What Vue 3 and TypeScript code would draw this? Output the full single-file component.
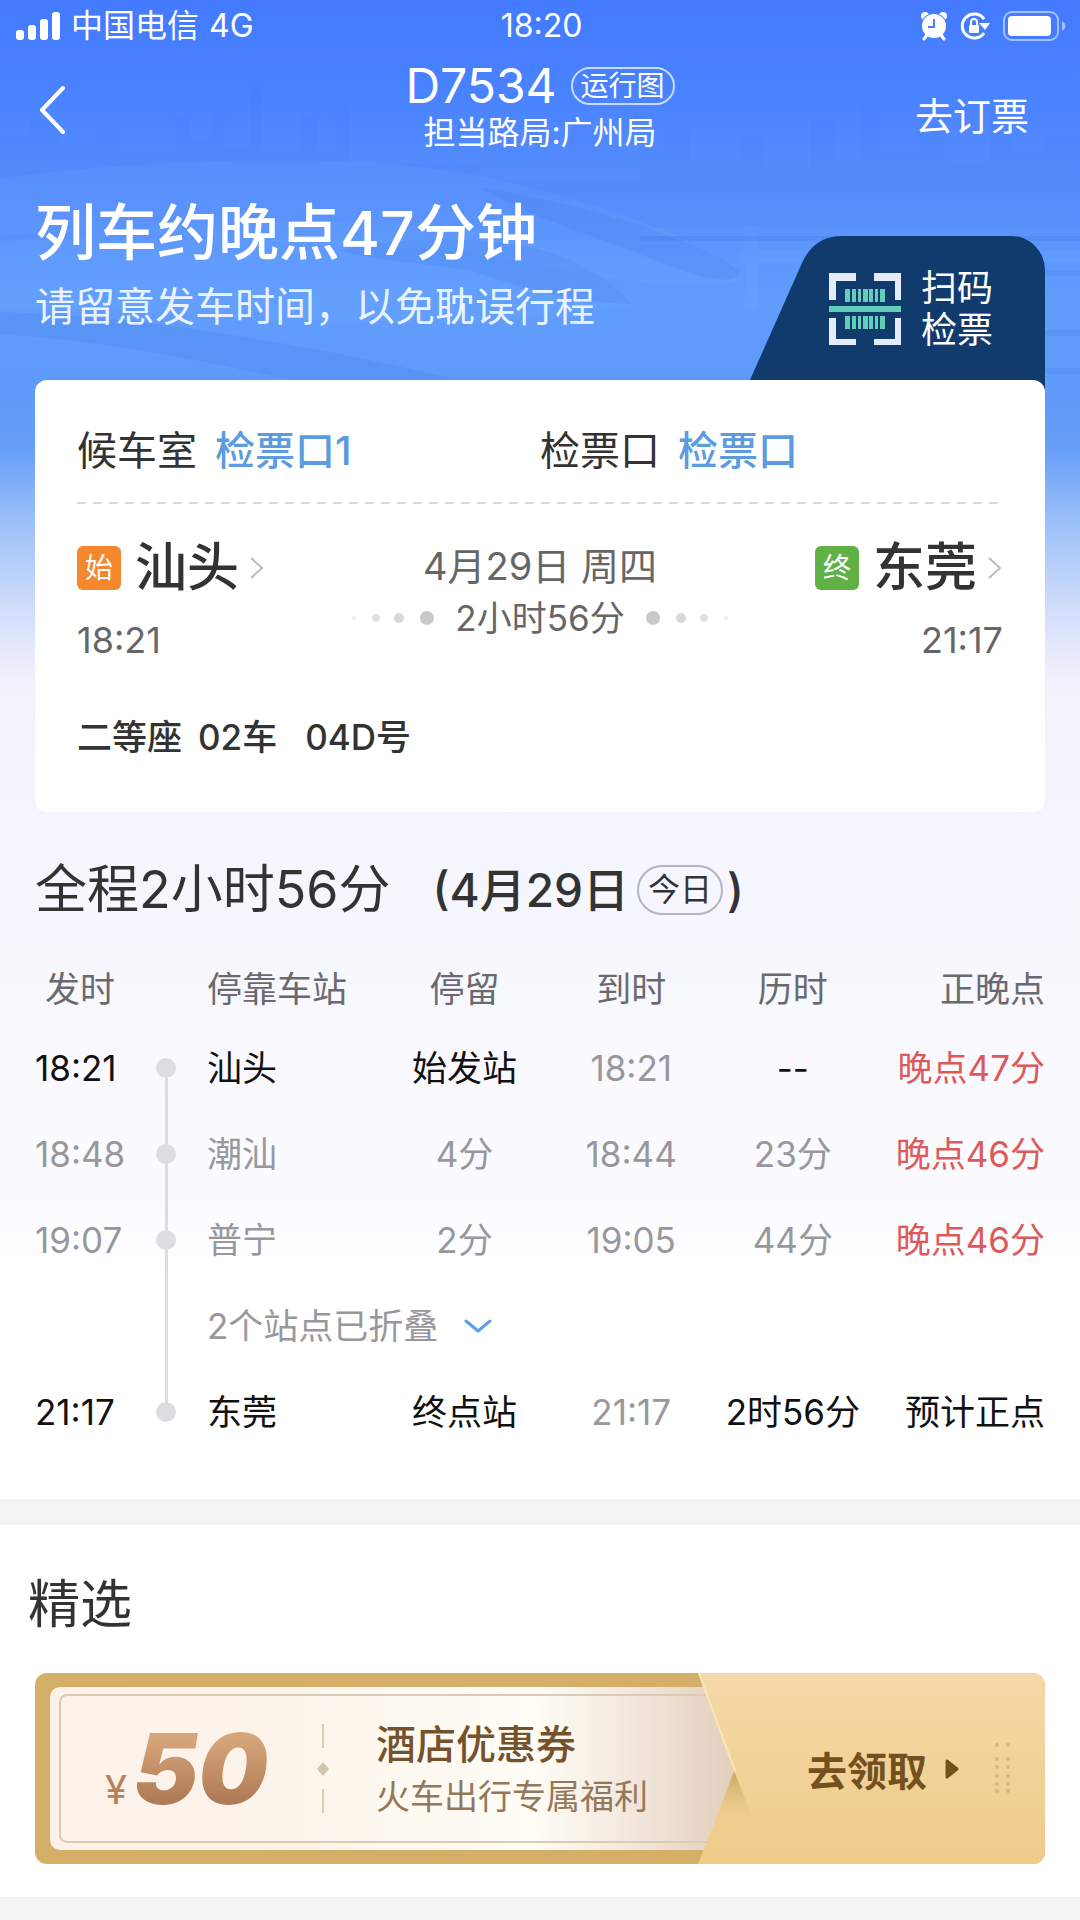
<script setup lang="ts">
type Tone = 'strong' | 'muted' | 'late'

interface Stop {
  depart: string
  station: string
  stay: string
  arrive: string
  elapsed: string
  status: string
  endpoint: boolean
  statusTone: Tone
}

const headers: string[] = ['停留', '到时', '历时']

const stops: Stop[] = [
  { depart: '18:21', station: '汕头', stay: '始发站', arrive: '18:21', elapsed: '--', status: '晚点47分', endpoint: true, statusTone: 'late' },
  { depart: '18:48', station: '潮汕', stay: '4分', arrive: '18:44', elapsed: '23分', status: '晚点46分', endpoint: false, statusTone: 'late' },
  { depart: '19:07', station: '普宁', stay: '2分', arrive: '19:05', elapsed: '44分', status: '晚点46分', endpoint: false, statusTone: 'late' },
]

const lastStop: Stop = {
  depart: '21:17', station: '东莞', stay: '终点站', arrive: '21:17', elapsed: '2时56分', status: '预计正点', endpoint: true, statusTone: 'strong',
}

const barcode: number[][] = [[16, 5], [23, 4], [29, 3], [34, 5], [40, 4], [46, 3], [51, 5]]
const perforation: number[] = [72, 86, 94, 103, 111, 118]
</script>

<template>
  <main class="page">
    <svg class="scene" viewBox="0 0 1080 400" preserveAspectRatio="xMidYMin slice" aria-hidden="true">
      <path class="city" d="M0 135H30V120H60V145H95V130H120V150H175V115H190V140H212V110H225V148H250V80H262V150H300V115H318V150H335V105H350V165H480V180H640V150H665V130H690V160H740V138H765V170H810V120H835V160H860V105H880V150H920V125H945V165H990V110H1012V150H1045V135H1080V240H0Z" />
      <path class="body" d="M0 178C160 158 370 150 500 180C600 204 700 236 745 280C640 300 520 250 400 248C240 244 120 225 0 236Z" />
      <path class="shade" d="M482 188C560 200 690 232 740 272C735 286 700 280 650 258C590 234 520 214 482 188Z" />
      <path class="body" d="M0 242C180 222 400 210 520 240C580 258 620 285 634 306C540 310 500 330 420 320C260 330 120 300 0 310Z" />
      <path class="shade" d="M340 250C420 232 530 238 575 262C605 278 620 290 632 304C570 302 520 288 470 270C420 262 380 262 340 250Z" />
      <path class="shade" d="M0 312C160 316 330 350 470 382H300C200 360 100 340 0 334Z" />
      <path class="body" d="M640 228H1080V236H640ZM740 250H1080V262H740ZM745 226H758V310H745Z" />
      <path class="shade" d="M640 236H1080V241H640ZM1000 270H1080V276H1000ZM1000 330H1080V336H1000ZM1000 368H1080V374H1000Z" />
    </svg>

    <div class="statusbar">
      <div class="carrier">
        <svg width="45" height="30" viewBox="0 0 45 30" fill="#fff" aria-hidden="true">
          <rect x="0" y="19" width="8" height="10" rx="3" />
          <rect x="12" y="14" width="8" height="15" rx="3" />
          <rect x="24" y="8" width="8" height="21" rx="3" />
          <rect x="36" y="1" width="8" height="28" rx="3" />
        </svg>
        <span>中国电信</span>
        <span>4G</span>
      </div>
      <time>18:20</time>
      <div class="indicators">
        <svg width="28" height="30" viewBox="0 0 28 30" aria-label="闹钟">
          <circle cx="5" cy="5" r="4" fill="#fff" />
          <circle cx="23" cy="5" r="4" fill="#fff" />
          <circle cx="14" cy="15" r="13" fill="#4a80ff" />
          <circle cx="14" cy="15" r="12" fill="#fff" />
          <path d="M7 24L4 28M21 24L24 28" stroke="#fff" stroke-width="3" stroke-linecap="round" />
          <path d="M14 8V16H8" stroke="#4a80ff" stroke-width="2" fill="none" />
        </svg>
        <svg width="30" height="30" viewBox="0 0 30 30" aria-label="方向锁定">
          <path d="M24 8A12 12 0 1 0 24 22" stroke="#fff" stroke-width="3" fill="none" />
          <path d="M19 12H30L25 19Z" fill="#fff" />
          <rect x="9" y="14" width="10" height="8" rx="1" fill="#fff" />
          <path d="M11 14V11A3 3 0 0 1 17 11V14" stroke="#fff" stroke-width="2" fill="none" />
        </svg>
        <svg width="65" height="32" viewBox="0 0 65 32" aria-label="电量">
          <rect x="2" y="2" width="54" height="28" rx="8" stroke="#fff" stroke-opacity=".5" stroke-width="2" fill="none" />
          <rect x="6" y="6" width="43" height="20" rx="4" fill="#fff" />
          <path d="M60 11Q67 16 60 21Z" fill="#fff" fill-opacity=".5" />
        </svg>
      </div>
    </div>

    <header class="nav">
      <button class="back" type="button" aria-label="返回">
        <svg width="28" height="50" viewBox="0 0 28 50" aria-hidden="true">
          <path d="M26 3L5 25L26 47" fill="none" stroke="#fff" stroke-width="4" stroke-linecap="round" stroke-linejoin="round" />
        </svg>
      </button>
      <div class="train">
        <div class="train-row">
          <h1>D7534</h1>
          <button class="pill" type="button">运行图</button>
        </div>
        <p>担当路局:广州局</p>
      </div>
      <a class="book" href="#book">去订票</a>
    </header>

    <section class="hero">
      <div class="notice">
        <h2>列车约晚点47分钟</h2>
        <p>请留意发车时间，以免耽误行程</p>
      </div>
      <button class="scan" type="button">
        <svg class="scan-bg" viewBox="0 0 295 158" aria-hidden="true">
          <path d="M0 144L52 27Q64 0 92 0H261A34 34 0 0 1 295 34V158H0Z" fill="#123b6d" />
        </svg>
        <svg width="72" height="72" viewBox="0 0 72 72" aria-hidden="true">
          <path d="M0 0H27V8H7V27H0ZM45 0H72V27H66V8H45ZM0 45H7V66H27V72H0ZM66 45H72V72H45V66H66Z" fill="#e4ebfb" />
          <rect y="33" width="72" height="6" fill="#62cfb9" />
          <g fill="#62cfb9">
            <template v-for="bar in barcode" :key="bar[0]">
              <rect :x="bar[0]" y="16" :width="bar[1]" height="13" />
              <rect :x="bar[0]" y="43" :width="bar[1]" height="13" />
            </template>
          </g>
        </svg>
        <span>扫码<br />检票</span>
      </button>
    </section>

    <section class="ticket">
      <div class="gates">
        <p>候车室 <b>检票口1</b></p>
        <p>检票口 <b>检票口</b></p>
      </div>
      <svg class="dash" width="100%" height="2" aria-hidden="true">
        <line x1="0" y1="1" x2="100%" y2="1" stroke="#d9d9d9" stroke-width="2" stroke-dasharray="9 7" />
      </svg>
      <div class="route">
        <div class="end">
          <a class="place" href="#shantou">
            <i class="badge start">始</i>
            <strong>汕头</strong>
            <svg class="chev" width="16" height="24" viewBox="0 0 16 24" aria-hidden="true"><path d="M2 2L13 12L2 22" /></svg>
          </a>
          <time>18:21</time>
        </div>
        <div class="middle">
          <p class="date">4月29日 周四</p>
          <div class="span">
            <svg width="84" height="16" viewBox="0 0 84 16" aria-hidden="true">
              <circle cx="3" cy="8" r="2" fill="#ececec" />
              <circle cx="25" cy="8" r="4" fill="#e0e0e0" />
              <circle cx="48" cy="8" r="5" fill="#d8d8d8" />
              <circle cx="76" cy="8" r="7" fill="#c9c9c9" />
            </svg>
            <span>2小时56分</span>
            <svg width="84" height="16" viewBox="0 0 84 16" aria-hidden="true">
              <circle cx="8" cy="8" r="7" fill="#c9c9c9" />
              <circle cx="36" cy="8" r="5" fill="#d8d8d8" />
              <circle cx="59" cy="8" r="4" fill="#e0e0e0" />
              <circle cx="81" cy="8" r="2" fill="#ececec" />
            </svg>
          </div>
        </div>
        <div class="end right">
          <a class="place" href="#dongguan">
            <i class="badge final">终</i>
            <strong>东莞</strong>
            <svg class="chev" width="16" height="24" viewBox="0 0 16 24" aria-hidden="true"><path d="M2 2L13 12L2 22" /></svg>
          </a>
          <time>21:17</time>
        </div>
      </div>
      <p class="seat"><span>二等座</span><span>02车</span><span>04D号</span></p>
    </section>

    <section class="schedule">
      <h2 class="total">
        <span>全程2小时56分</span>
        <span class="day">(4月29日<em>今日</em>)</span>
      </h2>
      <table>
        <colgroup>
          <col class="c-time" /><col class="c-rail" /><col class="c-station" /><col class="c-stay" />
          <col class="c-arrive" /><col class="c-elapsed" /><col />
        </colgroup>
        <thead>
          <tr>
            <th>发时</th>
            <th></th>
            <th class="left">停靠车站</th>
            <th v-for="name in headers" :key="name">{{ name }}</th>
            <th class="status">正晚点</th>
          </tr>
        </thead>
        <tbody>
          <tr v-for="stop in stops" :key="stop.station" :class="{ strong: stop.endpoint }">
            <td class="left">{{ stop.depart }}</td>
            <td class="rail"><i></i></td>
            <td class="left">{{ stop.station }}</td>
            <td>{{ stop.stay }}</td>
            <td class="arrive">{{ stop.arrive }}</td>
            <td>{{ stop.elapsed }}</td>
            <td class="status" :class="stop.statusTone">{{ stop.status }}</td>
          </tr>
          <tr>
            <td></td>
            <td class="rail"></td>
            <td class="left" colspan="5">
              <button class="fold" type="button">
                2个站点已折叠
                <svg width="28" height="16" viewBox="0 0 28 16" aria-hidden="true">
                  <path d="M2 3L14 13L26 3" fill="none" stroke="#5a9ee8" stroke-width="3" stroke-linecap="round" stroke-linejoin="round" />
                </svg>
              </button>
            </td>
          </tr>
          <tr class="strong">
            <td class="left">{{ lastStop.depart }}</td>
            <td class="rail"><i></i></td>
            <td class="left">{{ lastStop.station }}</td>
            <td>{{ lastStop.stay }}</td>
            <td class="arrive">{{ lastStop.arrive }}</td>
            <td>{{ lastStop.elapsed }}</td>
            <td class="status">{{ lastStop.status }}</td>
          </tr>
        </tbody>
      </table>
    </section>

    <section class="picks">
      <h2>精选</h2>
      <a class="coupon" href="#coupon">
        <div class="paper">
          <div class="frame">
            <p class="price"><span>¥</span><b>50</b></p>
            <svg class="sep" width="14" height="90" viewBox="0 0 14 90" aria-hidden="true">
              <path d="M7 0V24M7 65V89" stroke="#d8cbb9" stroke-width="2" />
              <path d="M7 38L13 45L7 52L1 45Z" fill="#d2c5b0" />
            </svg>
            <div class="offer">
              <strong>酒店优惠券</strong>
              <span>火车出行专属福利</span>
            </div>
          </div>
        </div>
        <div class="claim">
          <svg class="claim-bg" viewBox="0 0 347 191" preserveAspectRatio="none" aria-hidden="true">
            <defs>
              <linearGradient id="gold" x1="0" y1="0" x2="0" y2="1">
                <stop offset="0" stop-color="#f6d9a8" />
                <stop offset="1" stop-color="#eecb89" />
              </linearGradient>
              <linearGradient id="fold" x1="0" y1="0" x2="0" y2="1">
                <stop offset="0" stop-color="#c9a55c" />
                <stop offset="1" stop-color="#eccb8d" stop-opacity="0" />
              </linearGradient>
            </defs>
            <path d="M0 0H347V191H0L36 100Z" fill="url(#gold)" />
            <path d="M36 98L53 141V154H15Z" fill="url(#fold)" />
            <path d="M1 0L37 98" stroke="#fbe5bd" stroke-width="2" />
          </svg>
          <span>去领取</span>
          <svg width="14" height="20" viewBox="0 0 14 20" aria-hidden="true">
            <path d="M2 2L12 10L2 18Z" fill="#75501f" stroke="#75501f" stroke-width="3" stroke-linejoin="round" />
          </svg>
          <svg class="dots" width="18" height="191" viewBox="0 0 18 191" fill="#dcb57b" aria-hidden="true">
            <template v-for="y in perforation" :key="y">
              <circle cx="4" :cy="y" r="2" />
              <circle cx="15" :cy="y" r="2" />
            </template>
          </svg>
        </div>
      </a>
    </section>
    <div class="rest"></div>
  </main>
</template>

<style>
body {
  background: #f4f4f4;
}
</style>

<style scoped>
.page {
  position: relative;
  display: flex;
  flex-direction: column;
  min-height: 100vh;
  font-family: Inter, "Noto Sans CJK SC", sans-serif;
  color: #333;
  background: linear-gradient(180deg, #437aff 0, #4a83ff 100px, #5890fe 200px, #609dfd 300px, #5f9afb 400px, #689ff7 450px, #9abff8 520px, #d2defb 610px, #f3f0fc 680px, #f4f4fe 760px, #f7f7fe 960px, #fbfbff 1200px, #fff 1280px);
}
h1, h2, p {
  margin: 0;
  font-weight: 400;
}
button {
  padding: 0;
  border: 0;
  background: none;
  font: inherit;
  color: inherit;
}
a {
  color: inherit;
  text-decoration: none;
}
i, em {
  font-style: normal;
}
svg {
  display: block;
  flex: none;
}
.scene {
  position: absolute;
  top: 0;
  left: 0;
  width: 100%;
  height: 400px;
}
.city {
  fill: #3f78ea;
  fill-opacity: .08;
}
.body {
  fill: #7fb4ff;
  fill-opacity: .12;
}
.shade {
  fill: #2f68dc;
  fill-opacity: .14;
}
.statusbar, .nav, .hero, .ticket {
  position: relative;
}
.statusbar {
  display: grid;
  grid-template-columns: 1fr auto 1fr;
  align-items: center;
  height: 52px;
  padding: 0 13px 0 16px;
  font-size: 32px;
  line-height: 52px;
  color: #fff;
}
.carrier, .indicators {
  display: flex;
  align-items: center;
}
.carrier {
  gap: 10px;
}
.indicators {
  justify-content: flex-end;
  gap: 12px;
}
.nav {
  display: grid;
  grid-template-columns: 1fr auto 1fr;
  align-items: end;
  padding: 5px 37px 0;
  color: #fff;
}
.back {
  display: flex;
  align-items: center;
  width: 60px;
  height: 82px;
}
.train {
  text-align: center;
  font-size: 32px;
  line-height: 36px;
}
.train-row {
  display: flex;
  align-items: center;
  justify-content: center;
  gap: 14px;
}
h1 {
  font-size: 48px;
  line-height: 58px;
}
.pill {
  padding: 0 8px;
  border: 2px solid rgba(255, 255, 255, .7);
  border-radius: 20px;
  font-size: 28px;
  line-height: 34px;
}
.book {
  justify-self: end;
  padding-right: 14px;
  font-size: 38px;
  line-height: 70px;
}
.hero {
  display: flex;
  justify-content: space-between;
  padding: 45px 35px 0;
  height: 184px;
  color: #fff;
}
.notice h2 {
  font-size: 61px;
  line-height: 74px;
  font-weight: 500;
}
.notice p {
  margin-top: 9px;
  font-size: 40px;
  line-height: 56px;
  color: #e8f3ff;
}
.scan {
  position: relative;
  display: flex;
  align-items: center;
  align-self: flex-end;
  box-sizing: border-box;
  gap: 20px;
  width: 295px;
  height: 158px;
  margin-bottom: -14px;
  padding: 0 0 12px 79px;
  font-size: 36px;
  line-height: 42px;
}
.scan-bg {
  position: absolute;
  inset: 0;
  width: 100%;
  height: 100%;
}
.scan-bg ~ * {
  position: relative;
}
.ticket {
  margin: 0 35px;
  padding: 41px 42px 50px;
  border-radius: 12px;
  background: #fff;
}
.gates {
  display: grid;
  grid-template-columns: 1fr 1fr;
  font-size: 40px;
  line-height: 60px;
}
.gates p {
  display: flex;
  gap: 18px;
}
.gates b {
  font-weight: 500;
  color: #5b9be0;
}
.dash {
  margin-top: 21px;
}
.route {
  display: flex;
  justify-content: space-between;
  margin-top: 27px;
  color: #666;
}
.end {
  display: flex;
  flex-direction: column;
  gap: 11px;
  font-size: 36px;
  line-height: 48px;
}
.right {
  align-items: flex-end;
}
.place {
  display: flex;
  align-items: center;
  color: #333;
}
.badge {
  width: 44px;
  margin-right: 14px;
  border-radius: 6px;
  font-size: 28px;
  line-height: 44px;
  text-align: center;
  color: #fff;
}
.start {
  background: #f5872d;
}
.final {
  background: #5fb045;
}
.place strong {
  font-size: 52px;
  line-height: 74px;
  font-weight: 500;
}
.chev {
  margin-left: 10px;
  fill: none;
  stroke: #bbb;
  stroke-width: 2;
}
.middle {
  padding-top: 9px;
  text-align: center;
  font-size: 35px;
  line-height: 52px;
}
.date {
  font-size: 38px;
}
.span {
  display: flex;
  align-items: center;
  justify-content: center;
  gap: 20px;
}
.seat {
  display: flex;
  gap: 16px;
  margin-top: 48px;
  font-size: 35px;
  line-height: 50px;
  font-weight: 500;
}
.seat span:last-child {
  margin-left: 12px;
}
.schedule {
  position: relative;
  padding: 42px 35px 44px;
}
.total {
  display: flex;
  align-items: center;
  gap: 42px;
  font-size: 52px;
  line-height: 72px;
}
.day {
  display: flex;
  align-items: center;
  font-size: 46px;
  font-weight: 500;
}
.day em {
  margin: 0 4px 0 8px;
  padding: 0 9px;
  border: 2px solid #b4b4c4;
  border-radius: 26px;
  font-size: 32px;
  line-height: 46px;
  font-weight: 400;
}
table {
  width: 100%;
  margin-top: 27px;
  border-collapse: collapse;
  table-layout: fixed;
  font-size: 35px;
  line-height: 48px;
}
.c-time {
  width: 90px;
}
.c-rail {
  width: 82px;
}
.c-station, .c-arrive {
  width: 18%;
}
.c-stay {
  width: 15%;
}
.c-elapsed {
  width: 14%;
}
th, td {
  padding: 0;
  font-weight: 400;
  text-align: center;
  white-space: nowrap;
}
th {
  height: 72px;
  color: #6a6a6e;
}
td {
  height: 86px;
  color: #98989c;
}
.left {
  text-align: left;
}
.status {
  text-align: right;
}
.strong td {
  color: #111;
}
.strong .arrive {
  color: #98989c;
}
tr .status.late {
  color: #dc5a5a;
}
.rail {
  background: linear-gradient(#dddde0, #dddde0) center / 3px 100% no-repeat;
}
tbody tr:first-child .rail {
  background-size: 3px 50%;
  background-position: center bottom;
}
tbody tr:last-child .rail {
  background-size: 3px 50%;
  background-position: center top;
}
.rail i {
  display: block;
  width: 20px;
  height: 20px;
  margin: 0 auto;
  border-radius: 50%;
  background: #dddde0;
}
.fold {
  display: flex;
  align-items: center;
  gap: 26px;
}
.picks {
  padding: 44px 35px 33px;
  border-top: 26px solid #f4f4f4;
  background: #fff;
}
.rest {
  flex: 1;
  background: #f4f4f4;
}
.picks h2 {
  margin-left: -7px;
  font-size: 52px;
  line-height: 72px;
}
.coupon {
  display: flex;
  height: 191px;
  margin-top: 32px;
  border-radius: 12px;
  overflow: hidden;
  background: #d5af68;
}
.paper {
  flex: 1;
  margin: 14px -40px 14px 15px;
  padding: 7px 0 7px 9px;
  border-radius: 10px 0 0 10px;
  background: linear-gradient(90deg, #fcf2ea 0, #fcf3ea 30%, #fffdf6 70%, #f3e8de 84%, #e2cdbb 100%);
}
.frame {
  display: flex;
  align-items: center;
  box-sizing: border-box;
  height: 149px;
  border: 2px solid #dccbb4;
  border-right: 0;
  border-radius: 8px 0 0 8px;
}
.price {
  display: flex;
  align-items: baseline;
  width: 255px;
  padding-left: 44px;
  box-sizing: border-box;
  color: #b38259;
}
.price span {
  margin-right: 6px;
  font-size: 40px;
}
.price b {
  padding-right: 8px;
  font-size: 98px;
  line-height: 100px;
  font-weight: 900;
  font-style: italic;
  background: linear-gradient(180deg, #d6a57c 20%, #b07c55 80%);
  -webkit-background-clip: text;
  background-clip: text;
  color: transparent;
}
.offer {
  display: flex;
  flex-direction: column;
  margin-left: 46px;
  padding-top: 4px;
  font-size: 34px;
  line-height: 52px;
  color: #93785a;
}
.offer strong {
  font-size: 40px;
  font-weight: 500;
  color: #75522c;
}
.claim {
  position: relative;
  display: flex;
  align-items: center;
  box-sizing: border-box;
  width: 347px;
  padding-left: 109px;
  font-size: 40px;
  font-weight: 700;
  color: #75501f;
}
.claim > * {
  position: relative;
}
.claim .claim-bg {
  position: absolute;
  inset: 0;
  width: 100%;
  height: 100%;
}
.claim span {
  margin-right: 18px;
}
.dots {
  margin-left: 34px;
}
</style>
